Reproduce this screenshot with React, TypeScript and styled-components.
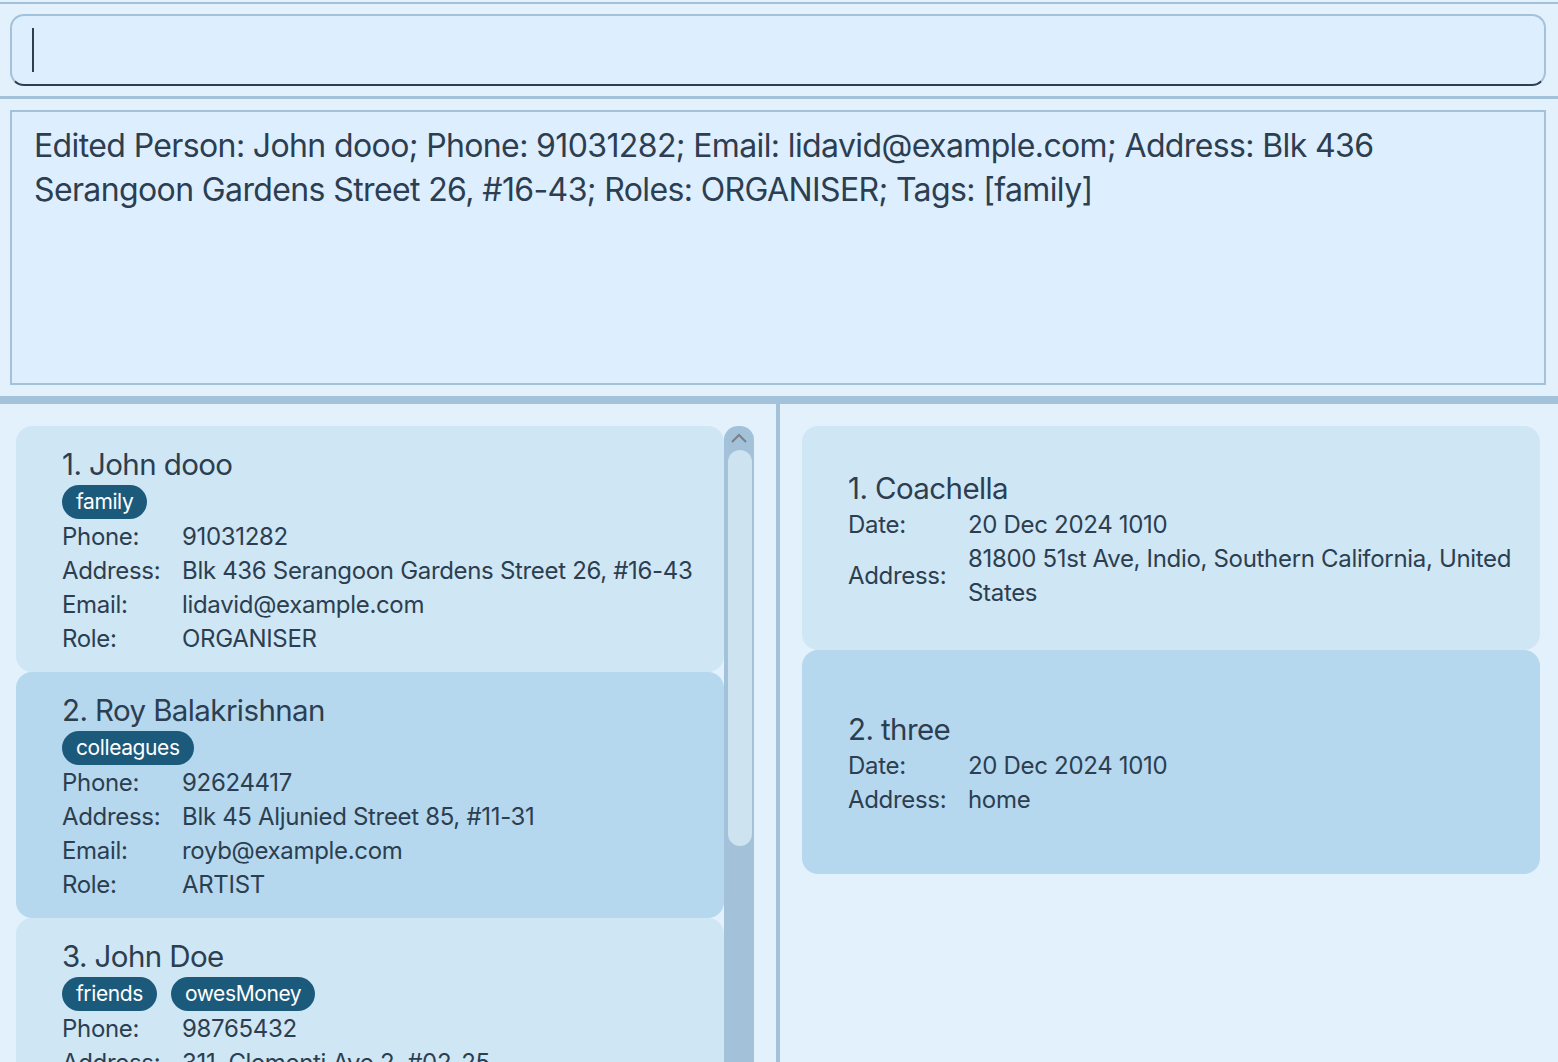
import React from "react";
import styled, { createGlobalStyle } from "styled-components";

const GlobalStyle = createGlobalStyle`
  html, body { margin: 0; padding: 0; }
  body {
    background: #e3f1fc;
    font-family: Inter, "Open Sans", "DejaVu Sans", sans-serif;
    color: #2c3e50;
  }
`;

const Shell = styled.div`
  height: 1062px;
  display: flex;
  flex-direction: column;
  overflow: hidden;
  background: #e3f1fc;
`;

const Rule = styled.div<{ $h: number; $top?: number }>`
  height: ${(p) => p.$h}px;
  margin-top: ${(p) => p.$top ?? 0}px;
  background: #a3c1d9;
  flex: none;
`;

const CommandArea = styled.div`
  padding: 10px 12px 10px 10px;
  flex: none;
`;

const CommandBox = styled.div`
  height: 72px;
  box-sizing: border-box;
  border: 2px solid #a3c1d9;
  border-bottom: 2px solid #2c3e50;
  border-radius: 14px;
  background: #ddeeff;
  display: flex;
  align-items: center;
  padding-left: 20px;
`;

const Caret = styled.div`
  width: 1.5px;
  height: 44px;
  background: #2c3e50;
`;

const ResultArea = styled.div`
  padding: 11px 12px 11px 10px;
  flex: none;
`;

const ResultBox = styled.div`
  height: 275px;
  box-sizing: border-box;
  border: 2px solid #a3c1d9;
  background: #ddeeff;
  padding: 12px 22px;
  font-size: 32px;
  line-height: 44px;
  letter-spacing: -0.62px;
  color: #2c3e50;
`;

const Main = styled.div`
  flex: 1;
  display: flex;
  min-height: 0;
`;

const LeftPanel = styled.div`
  width: 776px;
  flex: none;
  box-sizing: border-box;
  padding: 22px 22px 0 16px;
  display: flex;
  overflow: hidden;
`;

const VDivider = styled.div`
  width: 4px;
  flex: none;
  background: #a3c1d9;
`;

const RightPanel = styled.div`
  flex: 1;
  box-sizing: border-box;
  padding: 22px 18px 0 22px;
  display: flex;
  flex-direction: column;
`;

const List = styled.div`
  flex: 1;
  display: flex;
  flex-direction: column;
`;

const Card = styled.div<{ $alt?: boolean; $h: number; $center?: boolean }>`
  height: ${(p) => p.$h}px;
  flex: none;
  box-sizing: border-box;
  border-radius: 16px;
  background: ${(p) => (p.$alt ? "#b5d8ee" : "#cfe6f5")};
  padding: ${(p) => (p.$center ? "2px 18px 0 46px" : "19px 20px 0 46px")};
  display: flex;
  flex-direction: column;
  justify-content: ${(p) => (p.$center ? "center" : "flex-start")};
`;

const Name = styled.div<{ $gap?: number }>`
  font-size: 29.5px;
  line-height: 38px;
  letter-spacing: -0.6px;
  color: #2c3e50;
  margin-bottom: ${(p) => p.$gap ?? 0}px;
`;

const Tags = styled.div`
  display: flex;
  gap: 14px;
  margin: 2px 0 1px;
`;

const Tag = styled.span`
  background: #1c5a7c;
  color: #ffffff;
  font-size: 21px;
  line-height: 34px;
  height: 34px;
  padding: 0 14px;
  letter-spacing: -0.4px;
  border-radius: 17px;
`;

const Row = styled.div`
  display: grid;
  grid-template-columns: 120px 1fr;
  font-size: 24px;
  line-height: 34px;
  letter-spacing: -0.32px;
  color: #2c3e50;
`;

const Label = styled.span`
  align-self: center;
`;

const Value = styled.span``;

const Scrollbar = styled.div`
  width: 30px;
  flex: none;
  background: #a3c1d9;
  border-radius: 14px 14px 0 0;
  display: flex;
  flex-direction: column;
  align-items: center;
  padding-top: 4px;
  box-sizing: border-box;
`;

const Arrow = styled.svg`
  width: 20px;
  height: 16px;
  flex: none;
`;

const Thumb = styled.div`
  width: 24px;
  height: 396px;
  margin-top: 4px;
  border-radius: 12px;
  background: #cde3ef;
  margin-left: 2px;
`;

type Person = {
  name: string;
  tags: string[];
  phone: string;
  address: string;
  email: string;
  role: string;
};

const people: Person[] = [
  {
    name: "1. John dooo",
    tags: ["family"],
    phone: "91031282",
    address: "Blk 436 Serangoon Gardens Street 26, #16-43",
    email: "lidavid@example.com",
    role: "ORGANISER",
  },
  {
    name: "2. Roy Balakrishnan",
    tags: ["colleagues"],
    phone: "92624417",
    address: "Blk 45 Aljunied Street 85, #11-31",
    email: "royb@example.com",
    role: "ARTIST",
  },
  {
    name: "3. John Doe",
    tags: ["friends", "owesMoney"],
    phone: "98765432",
    address: "311, Clementi Ave 2, #02-25",
    email: "johnd@example.com",
    role: "ARTIST",
  },
];

const events = [
  {
    name: "1. Coachella",
    date: "20 Dec 2024 1010",
    address: "81800 51st Ave, Indio, Southern California, United States",
  },
  { name: "2. three", date: "20 Dec 2024 1010", address: "home" },
];

export default function App() {
  return (
    <Shell>
      <GlobalStyle />
      <Rule $h={2} $top={2} />
      <CommandArea>
        <CommandBox>
          <Caret />
        </CommandBox>
      </CommandArea>
      <Rule $h={3} />
      <ResultArea>
        <ResultBox>
          Edited Person: John dooo; Phone: 91031282; Email: lidavid@example.com; Address: Blk 436
          Serangoon Gardens Street 26, #16-43; Roles: ORGANISER; Tags: [family]
        </ResultBox>
      </ResultArea>
      <Rule $h={8} />
      <Main>
        <LeftPanel>
          <List>
            {people.map((p, i) => (
              <Card key={p.name} $h={246} $alt={i % 2 === 1}>
                <Name>{p.name}</Name>
                <Tags>
                  {p.tags.map((t) => (
                    <Tag key={t}>{t}</Tag>
                  ))}
                </Tags>
                <Row>
                  <Label>Phone:</Label>
                  <Value>{p.phone}</Value>
                </Row>
                <Row>
                  <Label>Address:</Label>
                  <Value>{p.address}</Value>
                </Row>
                <Row>
                  <Label>Email:</Label>
                  <Value>{p.email}</Value>
                </Row>
                <Row>
                  <Label>Role:</Label>
                  <Value>{p.role}</Value>
                </Row>
              </Card>
            ))}
          </List>
          <Scrollbar>
            <Arrow viewBox="0 0 20 16">
              <path d="M3 12 L10 5 L17 12" fill="none" stroke="#7b7f86" strokeWidth="2" />
            </Arrow>
            <Thumb />
          </Scrollbar>
        </LeftPanel>
        <VDivider />
        <RightPanel>
          {events.map((e, i) => (
            <Card key={e.name} $h={224} $alt={i % 2 === 1} $center>
              <Name $gap={1}>{e.name}</Name>
              <Row>
                <Label>Date:</Label>
                <Value>{e.date}</Value>
              </Row>
              <Row>
                <Label>Address:</Label>
                <Value>{e.address}</Value>
              </Row>
            </Card>
          ))}
        </RightPanel>
      </Main>
    </Shell>
  );
}
